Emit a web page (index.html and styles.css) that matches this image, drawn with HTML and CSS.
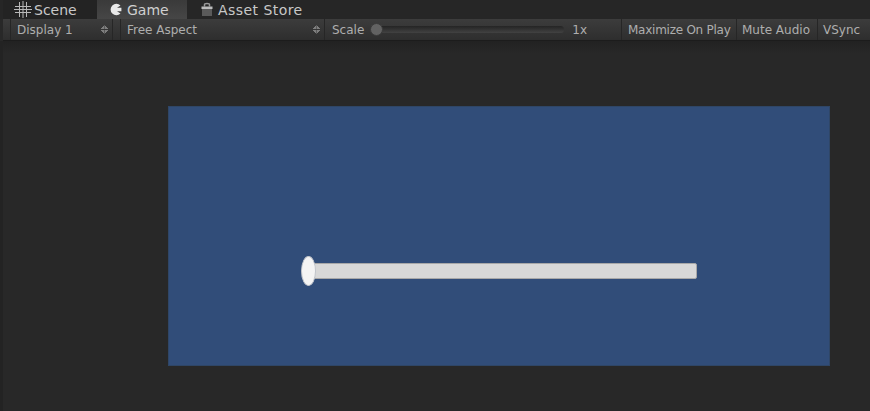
FILE: index.html
```html
<!DOCTYPE html>
<html lang="en">
<head>
  <meta charset="UTF-8">
  <title>Game</title>
  <link rel="stylesheet" href="styles.css">
</head>
<body>
  <!-- Tabs -->
  <div class="tabs">
    <div class="tab tab-scene">
      <svg class="tab-icon" width="18" height="17" viewBox="0 0 18 17">
        <path d="M5.5 1v15M12.5 1v15M1 5.5h16M1 11.5h16M9 0v17M0 8.5h18" stroke="#b8b8b8" stroke-width="1" fill="none"/>
      </svg>
      <span>Scene</span>
    </div>
    <div class="tab tab-game">
      <svg class="tab-icon" width="13" height="13" viewBox="0 0 13 13">
        <path d="M11.5 2.4A5.8 5.8 0 1 0 11.5 10.6L8 8.2H12.4V4.8H8Z" fill="#e8e8e8"/>
      </svg>
      <span>Game</span>
    </div>
    <div class="tab tab-store">
      <svg class="tab-icon" width="12" height="15" viewBox="0 0 12 15">
        <path d="M3.5 4.5V2.5C3.5 1 8.5 1 8.5 2.5V4.5" stroke="#9a9a9a" stroke-width="1.5" fill="none"/>
        <rect x="0.5" y="4.5" width="11" height="2.5" fill="#bcbcbc"/>
        <rect x="1" y="7" width="10" height="7" fill="#5a5a5a"/>
      </svg>
      <span class="store-label">Asset Store</span>
    </div>
  </div>

  <!-- Toolbar -->
  <div class="toolbar">
    <div class="tool tool-stub"></div>
    <div class="tool tool-display">
      <span>Display 1</span>
      <span class="stepper"></span>
    </div>
    <div class="tool tool-stub"></div>
    <div class="tool tool-aspect">
      <span>Free Aspect</span>
      <span class="stepper"></span>
    </div>
    <div class="tool tool-scale">
      <span>Scale</span>
      <div class="scale-track"><div class="scale-knob"></div></div>
      <span class="scale-value">1x</span>
    </div>
    <div class="tool tool-max">Maximize On Play</div>
    <div class="tool tool-mute">Mute Audio</div>
    <div class="tool tool-vsync">VSync</div>
  </div>

  <!-- Game view -->
  <div class="view">
    <div class="screen">
      <div class="slider">
        <div class="slider-handle"></div>
        <div class="slider-bar"></div>
      </div>
    </div>
  </div>
</body>
</html>
```

FILE: styles.css
```css
html, body {
  margin: 0;
  height: 100%;
}

body {
  width: 870px;
  height: 411px;
  overflow: hidden;
  display: flex;
  flex-direction: column;
  background: #282828;
  font-family: "DejaVu Sans", sans-serif;
  color: #c4c4c4;
}

/* Tabs */
.tabs {
  display: flex;
  height: 19px;
  background: #262626;
  padding-left: 3px;
  flex: none;
}

.tab {
  display: flex;
  align-items: center;
  font-size: 14px;
  color: #c8c8c8;
  white-space: nowrap;
}

.tab-scene {
  width: 94px;
  padding-left: 11px;
  box-sizing: border-box;
  gap: 2px;
  background: #232323;
}

.tab-game {
  width: 90px;
  padding-left: 12px;
  box-sizing: border-box;
  gap: 5px;
  background: linear-gradient(#3a3a3a, #464646);
  color: #d0d0d0;
}

.tab-store {
  padding-left: 14px;
  gap: 5px;
}

.store-label {
  letter-spacing: 0.45px;
}

/* Toolbar */
.toolbar {
  display: flex;
  height: 22px;
  margin-left: 3px;
  flex: none;
  background: linear-gradient(#3c3c3c, #2e2e2e);
  border-bottom: 1px solid #1c1c1c;
  box-sizing: border-box;
  font-size: 12px;
  color: #aeaeae;
}

.tool {
  display: flex;
  align-items: center;
  box-sizing: border-box;
  border-right: 1px solid #262626;
  white-space: nowrap;
}

.tool-stub {
  width: 8px;
}

.tool-display {
  width: 102px;
  padding-left: 6px;
  justify-content: space-between;
}

.tool-aspect {
  width: 204px;
  padding-left: 6px;
  justify-content: space-between;
}

/* Small up and down arrows of a popup */
.stepper {
  display: block;
  width: 7px;
  height: 9px;
  margin-right: 4px;
  background:
    linear-gradient(135deg, transparent 50%, #7e7e7e 50%) 0 0 / 3.5px 4px no-repeat,
    linear-gradient(225deg, transparent 50%, #7e7e7e 50%) 100% 0 / 3.5px 4px no-repeat,
    linear-gradient(45deg, transparent 50%, #7e7e7e 50%) 0 100% / 3.5px 4px no-repeat,
    linear-gradient(315deg, transparent 50%, #7e7e7e 50%) 100% 100% / 3.5px 4px no-repeat;
}

.tool-scale {
  width: 297px;
  padding-left: 7px;
}

.scale-track {
  position: relative;
  width: 194px;
  height: 7px;
  margin-left: 6px;
  border-radius: 4px;
  background: linear-gradient(#242424, #424242);
}

.scale-knob {
  position: absolute;
  left: 0;
  top: -3px;
  width: 13px;
  height: 13px;
  box-sizing: border-box;
  border-radius: 50%;
  border: 1px solid #3a3a3a;
  background: #626262;
}

.scale-value {
  margin-left: 8px;
}

.tool-max {
  width: 115px;
  padding-left: 6px;
  letter-spacing: -0.25px;
}

.tool-mute {
  width: 81px;
  padding-left: 5px;
}

.tool-vsync {
  flex: 1;
  padding-left: 5px;
  border-right: none;
}

/* Game view */
.view {
  flex: 1;
  padding: 65px 40px 45px 165px;
  box-sizing: border-box;
  display: flex;
  border-left: 3px solid #232323;
  background: linear-gradient(#222222, #282828 12px);
}

.screen {
  flex: 1;
  background: #314d79;
  box-shadow: inset 0 0 0 1px #2f4666;
  display: flex;
  align-items: center;
  padding: 70px 133px 0 133px;
}

.slider {
  flex: 1;
  display: flex;
  align-items: center;
  height: 30px;
  position: relative;
}

.slider-handle {
  position: absolute;
  left: 0;
  top: 0;
  width: 15px;
  height: 30px;
  box-sizing: border-box;
  border-radius: 50%;
  border: 1px solid #c0c4ca;
  background: #f4f4f4;
}

.slider-bar {
  flex: 1;
  margin-left: 8px;
  height: 16px;
  box-sizing: border-box;
  border-radius: 2px;
  border: 1px solid #a8a8a8;
  background: #d8d8d8;
}
```
